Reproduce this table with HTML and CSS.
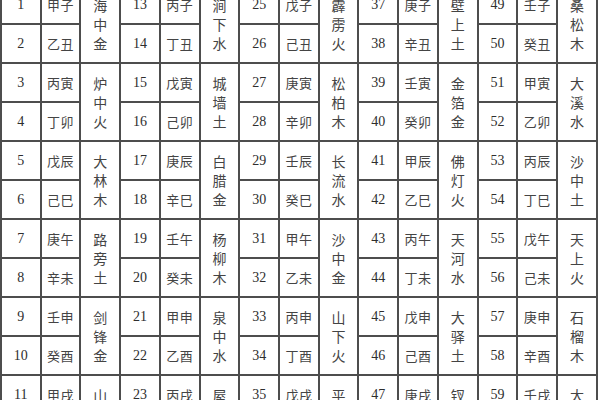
FILE: index.html
```html
<!DOCTYPE html>
<html lang="zh">
<head>
<meta charset="utf-8">
<title>六十甲子纳音表</title>
<link rel="stylesheet" href="styles.css">
</head>
<body>
<div class="sheet">
<table class="jiazi">
<colgroup>
<col><col><col><col><col><col><col><col><col><col><col><col><col><col><col>
</colgroup>
<tbody>
<tr><td class="n">1</td><td class="g">甲子</td><td class="y" rowspan="2">海<br>中<br>金</td><td class="n">13</td><td class="g">丙子</td><td class="y" rowspan="2">涧<br>下<br>水</td><td class="n">25</td><td class="g">戊子</td><td class="y" rowspan="2">霹<br>雳<br>火</td><td class="n">37</td><td class="g">庚子</td><td class="y" rowspan="2">壁<br>上<br>土</td><td class="n">49</td><td class="g">壬子</td><td class="y" rowspan="2">桑<br>松<br>木</td></tr>
<tr><td class="n">2</td><td class="g">乙丑</td><td class="n">14</td><td class="g">丁丑</td><td class="n">26</td><td class="g">己丑</td><td class="n">38</td><td class="g">辛丑</td><td class="n">50</td><td class="g">癸丑</td></tr>
<tr><td class="n">3</td><td class="g">丙寅</td><td class="y" rowspan="2">炉<br>中<br>火</td><td class="n">15</td><td class="g">戊寅</td><td class="y" rowspan="2">城<br>墙<br>土</td><td class="n">27</td><td class="g">庚寅</td><td class="y" rowspan="2">松<br>柏<br>木</td><td class="n">39</td><td class="g">壬寅</td><td class="y" rowspan="2">金<br>箔<br>金</td><td class="n">51</td><td class="g">甲寅</td><td class="y" rowspan="2">大<br>溪<br>水</td></tr>
<tr><td class="n">4</td><td class="g">丁卯</td><td class="n">16</td><td class="g">己卯</td><td class="n">28</td><td class="g">辛卯</td><td class="n">40</td><td class="g">癸卯</td><td class="n">52</td><td class="g">乙卯</td></tr>
<tr><td class="n">5</td><td class="g">戊辰</td><td class="y" rowspan="2">大<br>林<br>木</td><td class="n">17</td><td class="g">庚辰</td><td class="y" rowspan="2">白<br>腊<br>金</td><td class="n">29</td><td class="g">壬辰</td><td class="y" rowspan="2">长<br>流<br>水</td><td class="n">41</td><td class="g">甲辰</td><td class="y" rowspan="2">佛<br>灯<br>火</td><td class="n">53</td><td class="g">丙辰</td><td class="y" rowspan="2">沙<br>中<br>土</td></tr>
<tr><td class="n">6</td><td class="g">己巳</td><td class="n">18</td><td class="g">辛巳</td><td class="n">30</td><td class="g">癸巳</td><td class="n">42</td><td class="g">乙巳</td><td class="n">54</td><td class="g">丁巳</td></tr>
<tr><td class="n">7</td><td class="g">庚午</td><td class="y" rowspan="2">路<br>旁<br>土</td><td class="n">19</td><td class="g">壬午</td><td class="y" rowspan="2">杨<br>柳<br>木</td><td class="n">31</td><td class="g">甲午</td><td class="y" rowspan="2">沙<br>中<br>金</td><td class="n">43</td><td class="g">丙午</td><td class="y" rowspan="2">天<br>河<br>水</td><td class="n">55</td><td class="g">戊午</td><td class="y" rowspan="2">天<br>上<br>火</td></tr>
<tr><td class="n">8</td><td class="g">辛未</td><td class="n">20</td><td class="g">癸未</td><td class="n">32</td><td class="g">乙未</td><td class="n">44</td><td class="g">丁未</td><td class="n">56</td><td class="g">己未</td></tr>
<tr><td class="n">9</td><td class="g">壬申</td><td class="y" rowspan="2">剑<br>锋<br>金</td><td class="n">21</td><td class="g">甲申</td><td class="y" rowspan="2">泉<br>中<br>水</td><td class="n">33</td><td class="g">丙申</td><td class="y" rowspan="2">山<br>下<br>火</td><td class="n">45</td><td class="g">戊申</td><td class="y" rowspan="2">大<br>驿<br>土</td><td class="n">57</td><td class="g">庚申</td><td class="y" rowspan="2">石<br>榴<br>木</td></tr>
<tr><td class="n">10</td><td class="g">癸酉</td><td class="n">22</td><td class="g">乙酉</td><td class="n">34</td><td class="g">丁酉</td><td class="n">46</td><td class="g">己酉</td><td class="n">58</td><td class="g">辛酉</td></tr>
<tr><td class="n">11</td><td class="g">甲戌</td><td class="y" rowspan="2">山<br>头<br>火</td><td class="n">23</td><td class="g">丙戌</td><td class="y" rowspan="2">屋<br>上<br>土</td><td class="n">35</td><td class="g">戊戌</td><td class="y" rowspan="2">平<br>地<br>木</td><td class="n">47</td><td class="g">庚戌</td><td class="y" rowspan="2">钗<br>钏<br>金</td><td class="n">59</td><td class="g">壬戌</td><td class="y" rowspan="2">大<br>海<br>水</td></tr>
<tr><td class="n">12</td><td class="g">乙亥</td><td class="n">24</td><td class="g">丁亥</td><td class="n">36</td><td class="g">己亥</td><td class="n">48</td><td class="g">辛亥</td><td class="n">60</td><td class="g">癸亥</td></tr>
</tbody>
</table>
</div>
</body>
</html>
```

FILE: styles.css
```css
html, body {
  margin: 0;
  padding: 0;
  background: #ffffff;
  overflow: hidden;
}

.sheet {
  width: 600px;
  height: 400px;
  overflow: hidden;
}

.jiazi {
  margin-top: -16px;
  margin-left: 0;
  width: 598px;
  table-layout: fixed;
  border-collapse: collapse;
  font-family: "Liberation Serif", "Noto Sans CJK SC", serif;
  color: #3a3a3a;
}

.jiazi td {
  height: 37px;
  padding: 0;
  border: 2px solid #4d4d4d;
  text-align: center;
  vertical-align: middle;
}

.jiazi .n {
  font-family: "Liberation Serif", serif;
  font-size: 14px;
  color: #2e2e2e;
}

.jiazi .g {
  font-family: "Noto Sans CJK SC", sans-serif;
  font-size: 13px;
  font-weight: 400;
  color: #444444;
  letter-spacing: 0.5px;
}

.jiazi .y {
  font-family: "Noto Sans CJK SC", sans-serif;
  font-size: 14px;
  line-height: 19px;
  color: #444444;
}
```
